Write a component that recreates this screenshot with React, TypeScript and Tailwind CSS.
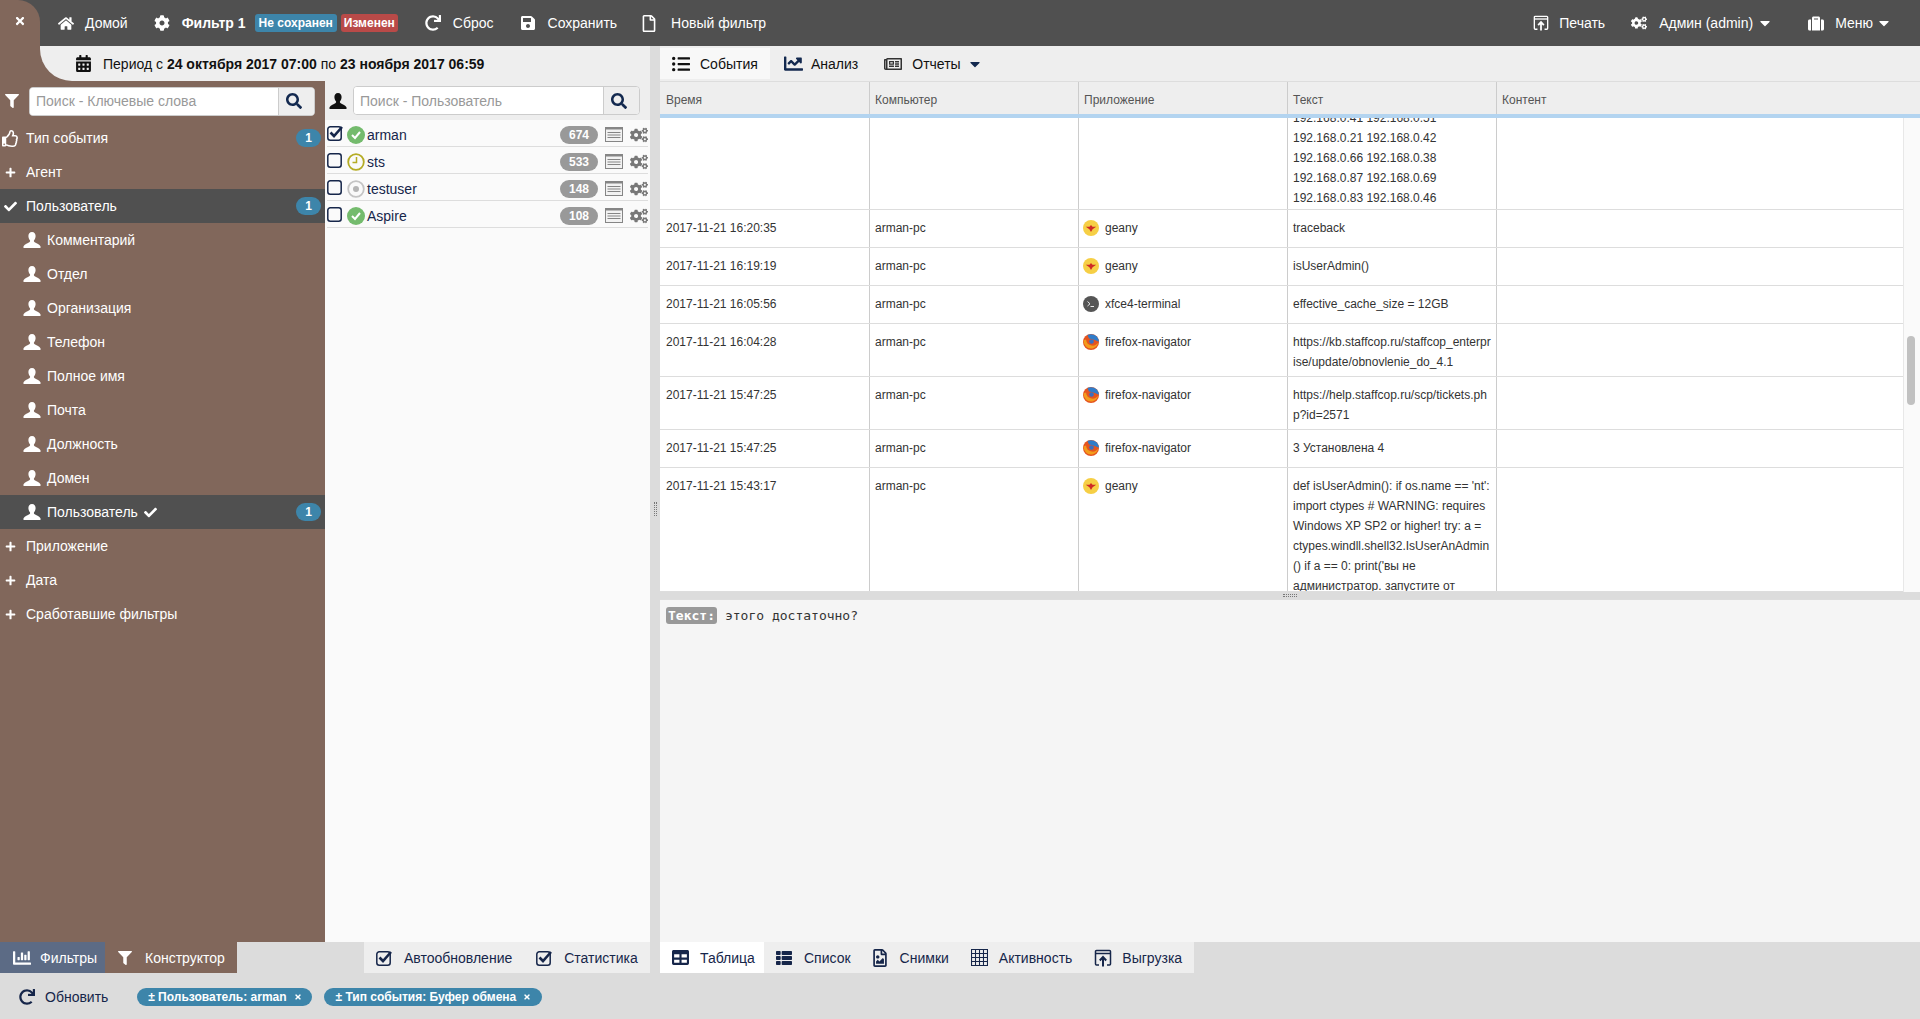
import type { ReactNode } from "react";
import {
  FaCalendarAlt,
  FaCaretDown,
  FaChartBar,
  FaChartLine,
  FaCheck,
  FaCog,
  FaCogs,
  FaFilter,
  FaHome,
  FaListUl,
  FaPlus,
  FaRedo,
  FaRegFile,
  FaRegFileImage,
  FaRegNewspaper,
  FaRegThumbsUp,
  FaSave,
  FaSearch,
  FaSuitcase,
  FaTable,
  FaThList,
  FaTimes,
} from "react-icons/fa";

/* ---------------------------------- icons --------------------------------- */

function UserGlyph({ className = "" }: { className?: string }) {
  return (
    <svg viewBox="0 0 18 18" width="18" height="18" className={className} fill="currentColor">
      <path d="M9 1c2.400 0 3.600 1.800 3.600 4 0 1.900-.8 3.400-1.500 4.300-.5.800-.2 1.500.6 2 1.500.9 4.300 1.800 5.800 3.900V17H.5v-1.800c1.500-2.100 4.300-3 5.800-3.900.8-.5 1.100-1.200.6-2C6.200 8.400 5.400 6.900 5.400 5 5.400 2.800 6.600 1 9 1z" />
    </svg>
  );
}

function ExportGlyph({ size = 18 }: { size?: number }) {
  return (
    <svg viewBox="0 0 18 18" width={size} height={size} fill="none" stroke="currentColor" strokeWidth="1.5">
      <path d="M5 16H2.500a1 1 0 0 1-1-1V2.500a1 1 0 0 1 1-1h13a1 1 0 0 1 1 1V15a1 1 0 0 1-1 1H13" />
      <path d="M1.500 4.500h15" />
      <path d="M9 17.500V9M5.800 11.500 9 8l3.200 3.500" strokeWidth="2" />
    </svg>
  );
}

function GridGlyph() {
  return (
    <svg viewBox="0 0 16 16" width="17" height="17" fill="none" stroke="currentColor" strokeWidth="1">
      <path d="M.5.500h15v15H.5zM4.250.500v15M8 .500v15M11.750.500v15M.5 4.250h15M.5 8h15M.5 11.750h15" />
    </svg>
  );
}

function ListCardGlyph() {
  return (
    <svg viewBox="0 0 18 15" width="18" height="15" fill="none" stroke="#858585">
      <rect x="0.5" y="0.5" width="17" height="14" fill="#f2f2f2" />
      <rect x="0" y="0" width="18" height="2.500" fill="#858585" stroke="none" />
      <path d="M2.500 5.500h13M2.500 8h13M2.500 10.500h13" strokeWidth="1.200" />
    </svg>
  );
}

function CheckBox({ checked }: { checked: boolean }) {
  return (
    <svg viewBox="0 0 17 16" width="17" height="16" fill="none" stroke="#16264a" className="shrink-0">
      <rect x="0.8" y="1.800" width="13.400" height="13.400" rx="2.500" strokeWidth="1.500" />
      {checked && <path d="M3.500 7.500l3.500 3.500 8-9" strokeWidth="2.600" />}
    </svg>
  );
}

function StatusIcon({ kind }: { kind: "ok" | "clock" | "idle" }) {
  if (kind === "ok") {
    return (
      <svg viewBox="0 0 18 18" width="18" height="18">
        <circle cx="9" cy="9" r="9" fill="#74bb6d" />
        <path d="M5 9l3 3 5-6" fill="none" stroke="#fff" strokeWidth="2" />
      </svg>
    );
  }
  if (kind === "clock") {
    return (
      <svg viewBox="0 0 18 18" width="18" height="18" fill="none" stroke="#b5ac25" strokeWidth="1.800">
        <circle cx="9" cy="9" r="7.800" />
        <path d="M9.500 4v5.500H5.500" strokeWidth="1.500" />
      </svg>
    );
  }
  return (
    <svg viewBox="0 0 18 18" width="18" height="18">
      <circle cx="9" cy="9" r="7.800" fill="none" stroke="#c4c4c4" strokeWidth="1.800" />
      <circle cx="9" cy="9" r="3" fill="#b5b5b5" />
    </svg>
  );
}

function AppIcon({ app }: { app: string }) {
  if (app === "geany") {
    return (
      <svg viewBox="0 0 16 16" width="16" height="16">
        <circle cx="8" cy="8" r="8" fill="#f6cf45" />
        <path d="M2.800 6.800h3.700L8 5l1.500 1.800h3.700L9.600 9.200 8 12 6.400 9.200z" fill="#cf2a25" />
      </svg>
    );
  }
  if (app === "xfce4-terminal") {
    return (
      <svg viewBox="0 0 16 16" width="16" height="16">
        <circle cx="8" cy="8" r="8" fill="#555" />
        <path d="M4.500 5.500 7 7.800 4.500 10M7.500 10.500h3.500" fill="none" stroke="#e8e8e8" strokeWidth="1" />
      </svg>
    );
  }
  return (
    <svg viewBox="0 0 16 16" width="16" height="16">
      <circle cx="8" cy="8" r="8" fill="#e5541f" />
      <path d="M4.500 1A8 8 0 0 1 15.600 5.500c.2.700.3 1.500.3 2.300L13 6.500 9 5 6 4.500z" fill="#2f7cc9" />
      <circle cx="8.500" cy="7.500" r="2.300" fill="#3a6fc0" />
      <path d="M.5 6.500C.8 11 4 14.500 8 14.500c3.500 0 6.500-2.400 7.300-6C13.800 11 11 12 8.500 11.500 5.500 11 3.300 9 3 5.500z" fill="#f39c1b" />
    </svg>
  );
}

/* ---------------------------------- data ---------------------------------- */

const filterFields = ["Комментарий", "Отдел", "Организация", "Телефон", "Полное имя", "Почта", "Должность", "Домен"];

const users = [
  { name: "arman", count: 674, status: "ok", checked: true },
  { name: "sts", count: 533, status: "clock", checked: false },
  { name: "testuser", count: 148, status: "idle", checked: false },
  { name: "Aspire", count: 108, status: "ok", checked: false },
] as const;

const rows = [
  { time: "2017-11-21 16:20:35", app: "geany", text: ["traceback"], height: "h-[38px]" },
  { time: "2017-11-21 16:19:19", app: "geany", text: ["isUserAdmin()"], height: "h-[38px]" },
  { time: "2017-11-21 16:05:56", app: "xfce4-terminal", text: ["effective_cache_size = 12GB"], height: "h-[38px]" },
  {
    time: "2017-11-21 16:04:28",
    app: "firefox-navigator",
    text: ["https://kb.staffcop.ru/staffcop_enterpr", "ise/update/obnovlenie_do_4.1"],
    height: "h-[53px]",
  },
  {
    time: "2017-11-21 15:47:25",
    app: "firefox-navigator",
    text: ["https://help.staffcop.ru/scp/tickets.ph", "p?id=2571"],
    height: "h-[53px]",
  },
  { time: "2017-11-21 15:47:25", app: "firefox-navigator", text: ["3 Установлена 4"], height: "h-[38px]" },
  {
    time: "2017-11-21 15:43:17",
    app: "geany",
    text: [
      "def isUserAdmin(): if os.name == 'nt':",
      "import ctypes # WARNING: requires",
      "Windows XP SP2 or higher! try: a =",
      "ctypes.windll.shell32.IsUserAnAdmin",
      "() if a == 0: print('вы не",
      "администратор. запустите от",
    ],
    height: "flex-1",
  },
];

const columns = "grid grid-cols-[210px_209px_209px_209px_1fr]";

/* ------------------------------- small parts ------------------------------ */

function NavIcon({ children, className = "" }: { children: ReactNode; className?: string }) {
  return <span className={`flex w-4 shrink-0 items-center justify-center ${className}`}>{children}</span>;
}

function CountBadge() {
  return (
    <span className="ml-auto mr-[4px] flex h-[18px] w-[25px] items-center justify-center rounded-full bg-[#3d85aa] text-xs font-bold text-white">
      1
    </span>
  );
}

function SearchBox({ placeholder }: { placeholder: string }) {
  return (
    <div className="flex h-[29px] flex-1 overflow-hidden rounded-[4px] border border-[#ccc] bg-white">
      <input
        readOnly
        placeholder={placeholder}
        className="min-w-0 flex-1 bg-white px-[6px] text-sm outline-none placeholder:text-[#999]"
      />
      <span className="flex w-9 items-center border-l border-[#ccc] bg-[#eee] pl-[7px] text-[#13294f]">
        <FaSearch size={16} />
      </span>
    </div>
  );
}

function Cell({ children, first = false, last = false }: { children?: ReactNode; first?: boolean; last?: boolean }) {
  return (
    <div className={`overflow-hidden pt-2 ${first ? "px-[6px]" : "px-[5px]"} ${last ? "" : "border-r border-[#ccc]"}`}>
      {children}
    </div>
  );
}

/* ---------------------------------- page ---------------------------------- */

export default function App() {
  return (
    <div className="flex h-screen w-full flex-col overflow-hidden bg-[#dcdcdc] font-['Liberation_Sans',Arial,sans-serif] text-sm text-[#222]">
      {/* top bar */}
      <header className="flex h-[46px] shrink-0 items-center bg-[#505050] text-white">
        <div className="flex h-full w-10 shrink-0 justify-center rounded-tr-[22px] bg-[#81675b] pt-[15px] pr-[1px]">
          <FaTimes size={12} />
        </div>
        <NavIcon className="ml-[18px]"><FaHome size={17} /></NavIcon>
        <span className="ml-[11px]">Домой</span>
        <NavIcon className="ml-[26px]"><FaCog size={16} /></NavIcon>
        <span className="ml-3 font-bold">Фильтр 1</span>
        <span className="ml-[9px] rounded-[3px] bg-[#3d85aa] px-1 py-[1px] text-xs font-bold">Не сохранен</span>
        <span className="ml-1 rounded-[3px] bg-[#b94a48] px-[3px] py-[1px] text-xs font-bold">Изменен</span>
        <NavIcon className="ml-[27px]"><FaRedo size={16} /></NavIcon>
        <span className="ml-3">Сброс</span>
        <NavIcon className="ml-[26px]"><FaSave size={16} /></NavIcon>
        <span className="ml-3">Сохранить</span>
        <NavIcon className="ml-6"><FaRegFile size={17} /></NavIcon>
        <span className="ml-[14px]">Новый фильтр</span>

        <div className="ml-auto flex items-center pr-7">
          <NavIcon><ExportGlyph /></NavIcon>
          <span className="ml-[10px]">Печать</span>
          <NavIcon className="ml-[26px]"><FaCogs size={18} /></NavIcon>
          <span className="ml-3">Админ (admin)</span>
          <FaCaretDown size={16} className="ml-1" />
          <NavIcon className="ml-[35px]"><FaSuitcase size={17} /></NavIcon>
          <span className="ml-[11px]">Меню</span>
          <FaCaretDown size={16} className="ml-[3px]" />
        </div>
      </header>

      <div className="flex min-h-0 flex-1">
        {/* left pane */}
        <div className="flex w-[650px] shrink-0 flex-col bg-[#81675b]">
          <div className="ml-10 flex h-[35px] shrink-0 items-center rounded-bl-[32px] bg-[#eee] pl-[35px] text-[#111]">
            <FaCalendarAlt size={17} />
            <span className="ml-[11px]">
              Период с <b>24 октября 2017 07:00</b> по <b>23 ноября 2017 06:59</b>
            </span>
          </div>

          <div className="flex min-h-0 flex-1">
            {/* filter sidebar */}
            <nav className="flex w-[325px] shrink-0 flex-col text-white">
              <div className="flex h-[40px] items-center pl-[5px] pr-[10px]">
                <FaFilter size={14} className="mr-[10px] shrink-0" />
                <SearchBox placeholder="Поиск - Ключевые слова" />
              </div>
              <div className="flex h-[34px] items-center pl-[2px]">
                <FaRegThumbsUp size={17} className="mr-[7px]" />
                Тип события
                <CountBadge />
              </div>
              <div className="flex h-[34px] items-center pl-[5px]">
                <FaPlus size={11} className="mr-[10px]" />
                Агент
              </div>
              <div className="flex h-[34px] items-center bg-[#505050] pl-[4px]">
                <FaCheck size={13} className="mr-[9px]" />
                Пользователь
                <CountBadge />
              </div>
              {filterFields.map((field) => (
                <div key={field} className="flex h-[34px] items-center pl-[23px]">
                  <UserGlyph className="mr-[6px]" />
                  {field}
                </div>
              ))}
              <div className="flex h-[34px] items-center bg-[#505050] pl-[23px]">
                <UserGlyph className="mr-[6px]" />
                Пользователь
                <FaCheck size={13} className="ml-[6px]" />
                <CountBadge />
              </div>
              {["Приложение", "Дата", "Сработавшие фильтры"].map((label) => (
                <div key={label} className="flex h-[34px] items-center pl-[5px]">
                  <FaPlus size={11} className="mr-[10px]" />
                  {label}
                </div>
              ))}
            </nav>

            {/* user list */}
            <div className="flex min-w-0 flex-1 flex-col bg-[#fafafa]">
              <div className="flex h-[39px] shrink-0 items-center bg-[#eee] pl-[4px] pr-[10px]">
                <UserGlyph className="mr-[6px] shrink-0 text-[#111]" />
                <SearchBox placeholder="Поиск - Пользователь" />
              </div>
              {users.map((user) => (
                <div
                  key={user.name}
                  className="ml-[2px] mr-[2px] flex h-[27px] items-center border-b border-[#ddd] pt-[3px] text-[#16264a]"
                >
                  <span className="-mt-[3px]"><CheckBox checked={user.checked} /></span>
                  <span className="ml-[3px]"><StatusIcon kind={user.status} /></span>
                  <span className="ml-[2px]">{user.name}</span>
                  <span className="ml-auto flex h-[18px] w-[38px] items-center justify-center rounded-full bg-[#999] text-xs font-bold text-white">
                    {user.count}
                  </span>
                  <span className="ml-[7px]"><ListCardGlyph /></span>
                  <FaCogs size={18} className="ml-[7px] text-[#777]" />
                </div>
              ))}
            </div>
          </div>
        </div>

        {/* vertical splitter */}
        <div className="flex w-[10px] shrink-0 justify-center bg-[#dcdcdc] pt-[456px]">
          <div className="h-[14px] w-[3px] border-x border-dotted border-[#777]" />
        </div>

        {/* right pane */}
        <div className="flex min-w-0 flex-1 flex-col bg-[#eee]">
          <div className="flex h-[35px] shrink-0 items-center text-[#111]">
            <div className="flex h-[31px] w-[110px] items-center bg-[#f8f8f8] pl-3">
              <FaListUl size={18} />
              <span className="ml-[10px]">События</span>
            </div>
            <FaChartLine size={19} className="ml-[14px] text-[#13294f]" />
            <span className="ml-2">Анализ</span>
            <FaRegNewspaper size={18} className="ml-[26px] text-[#333]" />
            <span className="ml-[10px]">Отчеты</span>
            <FaCaretDown size={16} className="ml-[6px] text-[#13294f]" />
          </div>

          {/* table */}
          <div className={`${columns} h-[33px] shrink-0 border-t border-[#ddd] text-xs text-[#555]`}>
            {["Время", "Компьютер", "Приложение", "Текст", "Контент"].map((title, i) => (
              <div
                key={title}
                className={`flex items-center pt-[3px] ${i === 0 ? "px-[6px]" : "px-[5px]"} ${i < 4 ? "border-r border-[#ccc]" : ""}`}
              >
                {title}
              </div>
            ))}
          </div>
          <div className="h-1 shrink-0 bg-[#b3d4f0]" />

          <div className="flex h-[474px] shrink-0 overflow-hidden bg-white">
            <div className="flex min-w-0 flex-1 flex-col text-xs leading-5 text-[#333]">
              {/* row scrolled half out of view */}
              <div className={`${columns} h-[92px] shrink-0 border-b border-[#ddd]`}>
                <div className="border-r border-[#ccc]" />
                <div className="border-r border-[#ccc]" />
                <div className="border-r border-[#ccc]" />
                <div className="flex flex-col justify-end overflow-hidden border-r border-[#ccc] px-[5px] pb-px">
                  <div>192.168.0.41 192.168.0.51</div>
                  <div>192.168.0.21 192.168.0.42</div>
                  <div>192.168.0.66 192.168.0.38</div>
                  <div>192.168.0.87 192.168.0.69</div>
                  <div>192.168.0.83 192.168.0.46</div>
                </div>
                <div />
              </div>
              {rows.map((row) => (
                <div key={row.time + row.app + row.text[0]} className={`${columns} ${row.height} min-h-0 shrink-0 border-b border-[#ddd]`}>
                  <Cell first>{row.time}</Cell>
                  <Cell>arman-pc</Cell>
                  <Cell>
                    <div className="flex items-center gap-[6px]">
                      <span className="-ml-[1px]"><AppIcon app={row.app} /></span>
                      {row.app}
                    </div>
                  </Cell>
                  <Cell>
                    {row.text.map((line) => (
                      <div key={line} className="whitespace-nowrap">{line}</div>
                    ))}
                  </Cell>
                  <Cell last />
                </div>
              ))}
            </div>
            {/* scrollbar */}
            <div className="w-[17px] shrink-0 border-l border-[#e8e8e8] bg-[#fafafa] pl-[3px] pt-[218px]">
              <div className="h-[69px] w-2 rounded-full bg-[#c1c1c1]" />
            </div>
          </div>

          {/* horizontal splitter */}
          <div className="flex h-[7px] shrink-0 items-center justify-center bg-[#dcdcdc]">
            <div className="h-[3px] w-[14px] border-y border-dotted border-[#777]" />
          </div>

          {/* detail */}
          <div className="flex-1 border-t border-[#ddd] bg-[#f5f5f5] px-[6px] pt-[7px] font-['DejaVu_Sans_Mono',monospace] text-[13px] text-[#333]">
            <span className="mr-2 rounded-[3px] bg-[#999] px-[2px] py-px font-bold text-white">Текст:</span>
            этого достаточно?
          </div>
        </div>
      </div>

      {/* bottom tabs */}
      <div className="flex h-[31px] shrink-0 items-stretch text-[#16264a]">
        <div className="flex w-[105px] items-center bg-[#5c6b85] pl-[13px] text-white">
          <FaChartBar size={18} />
          <span className="ml-[9px]">Фильтры</span>
        </div>
        <div className="flex w-[132px] items-center bg-[#81675b] pl-[13px] text-white">
          <FaFilter size={14} />
          <span className="ml-[13px]">Конструктор</span>
        </div>
        <div className="ml-[127px] flex w-[286px] items-center bg-[#eee] pl-3">
          <CheckBox checked />
          <span className="ml-[11px]">Автообновление</span>
          <span className="ml-6"><CheckBox checked /></span>
          <span className="ml-[11px]">Статистика</span>
        </div>
        <div className="ml-[10px] flex w-[104px] items-center bg-white pl-3">
          <FaTable size={17} />
          <span className="ml-[11px]">Таблица</span>
        </div>
        <div className="flex w-[430px] items-center bg-[#eee] pl-3">
          <FaThList size={16} />
          <span className="ml-3">Список</span>
          <FaRegFileImage size={18} className="ml-5" />
          <span className="ml-[11px]">Снимки</span>
          <span className="ml-[22px]"><GridGlyph /></span>
          <span className="ml-[11px]">Активность</span>
          <span className="ml-[22px]"><ExportGlyph /></span>
          <span className="ml-[10px]">Выгрузка</span>
        </div>
      </div>

      {/* bottom bar */}
      <footer className="flex h-[46px] shrink-0 items-center bg-[#dcdcdc] pl-[19px] pt-[2px] text-[#16264a]">
        <FaRedo size={16} />
        <span className="ml-[10px]">Обновить</span>
        <span className="ml-[29px] flex h-[18px] w-[175px] items-center justify-center rounded-full bg-[#3d85aa] text-xs font-bold text-white">
          ± Пользователь: arman
          <FaTimes size={8} className="ml-[7px]" />
        </span>
        <span className="ml-3 flex h-[18px] w-[218px] items-center justify-center rounded-full bg-[#3d85aa] text-xs font-bold text-white">
          ± Тип события: Буфер обмена
          <FaTimes size={8} className="ml-[7px]" />
        </span>
      </footer>
    </div>
  );
}
